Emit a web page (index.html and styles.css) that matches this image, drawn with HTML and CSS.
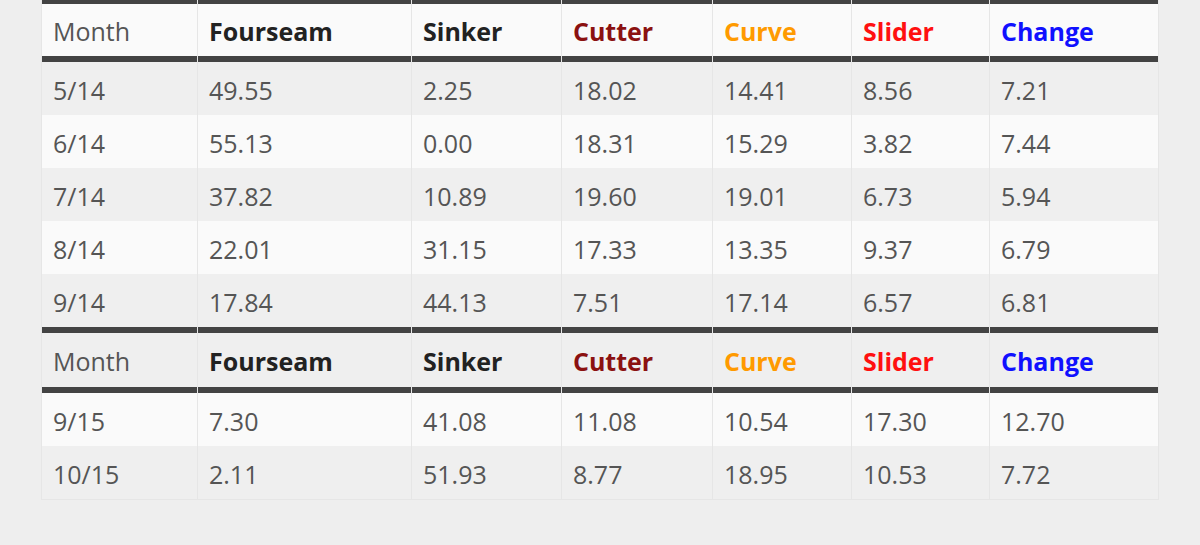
FILE: index.html
```html
<!DOCTYPE html>
<html>
<head>
<meta charset="utf-8">
<link rel="stylesheet" href="styles.css">
</head>
<body>
<div class="page">
<table class="pitches">
<colgroup>
<col class="c1"><col class="c2"><col class="c3"><col class="c4"><col class="c5"><col class="c6"><col class="c7">
</colgroup>
<tbody>
<tr class="head light first">
<th class="month">Month</th><th>Fourseam</th><th>Sinker</th><th class="cutter">Cutter</th><th class="curve">Curve</th><th class="slider">Slider</th><th class="change">Change</th>
</tr>
<tr class="grey"><td>5/14</td><td>49.55</td><td>2.25</td><td>18.02</td><td>14.41</td><td>8.56</td><td>7.21</td></tr>
<tr class="light"><td>6/14</td><td>55.13</td><td>0.00</td><td>18.31</td><td>15.29</td><td>3.82</td><td>7.44</td></tr>
<tr class="grey"><td>7/14</td><td>37.82</td><td>10.89</td><td>19.60</td><td>19.01</td><td>6.73</td><td>5.94</td></tr>
<tr class="light"><td>8/14</td><td>22.01</td><td>31.15</td><td>17.33</td><td>13.35</td><td>9.37</td><td>6.79</td></tr>
<tr class="grey"><td>9/14</td><td>17.84</td><td>44.13</td><td>7.51</td><td>17.14</td><td>6.57</td><td>6.81</td></tr>
<tr class="head grey second">
<th class="month">Month</th><th>Fourseam</th><th>Sinker</th><th class="cutter">Cutter</th><th class="curve">Curve</th><th class="slider">Slider</th><th class="change">Change</th>
</tr>
<tr class="light"><td>9/15</td><td>7.30</td><td>41.08</td><td>11.08</td><td>10.54</td><td>17.30</td><td>12.70</td></tr>
<tr class="grey"><td>10/15</td><td>2.11</td><td>51.93</td><td>8.77</td><td>18.95</td><td>10.53</td><td>7.72</td></tr>
</tbody>
</table>
</div>
</body>
</html>
```

FILE: styles.css
```css
html, body {
  margin: 0;
  padding: 0;
  background: #eeeeee;
}
.page {
  padding-left: 41px;
  font-family: "Open Sans", "DejaVu Sans", sans-serif;
}
.pitches {
  width: 1117px;
  table-layout: fixed;
  border-collapse: separate;
  border-spacing: 1px 0;
  background: #e6e6e6;
  border-bottom: 1px solid #e6e6e6;
  font-size: 25px;
  color: #555;
}
.c1 { width: 155px; }
.c2 { width: 213px; }
.c3 { width: 149px; }
.c4 { width: 150px; }
.c5 { width: 138px; }
.c6 { width: 137px; }
.c7 { width: 168px; }
.pitches td, .pitches th {
  padding: 2px 11px 0;
  text-align: left;
  height: 53px;
  line-height: 30px;
  box-sizing: border-box;
  white-space: nowrap;
}
.grey td, .grey th { background: #efefef; }
.light td, .light th { background: #fafafa; }
.head th {
  font-weight: 700;
  color: #222;
  border-bottom: 6px solid #434343;
}
.first th {
  border-top: 4px solid #434343;
  height: 62px;
}
.second th {
  border-top: 6px solid #434343;
  height: 66px;
}
.head th.month { font-weight: 400; color: #555; }
.head th.cutter { color: #8b1111; }
.head th.curve { color: #ff9a00; }
.head th.slider { color: #ff1010; }
.head th.change { color: #1010ff; }
```
